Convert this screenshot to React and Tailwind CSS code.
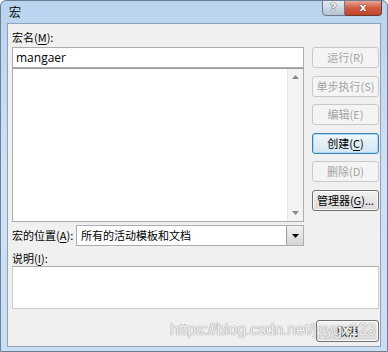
import React from 'react';

const cjk = { fontFamily: '"Noto Sans CJK SC", "Noto Sans", sans-serif' };

// 右側のボタン（無効 / 既定 / 通常）
const SideButton = ({ children, state = 'disabled', className = '' }) => {
  const base = 'h-[21px] w-[67px] rounded-[3px] border flex items-center justify-center text-[11px] leading-none whitespace-nowrap';
  const styles = {
    disabled: 'border-[#c7cacc] bg-[#f4f4f4] text-[#a3a3a3]',
    default: 'border-[#3c7fb1] bg-gradient-to-b from-[#eef6fc] to-[#d4e6f3] text-black shadow-[inset_0_0_0_1px_#a9d9f5]',
    normal: 'border-[#707070] bg-gradient-to-b from-[#f2f2f2] to-[#d9d9d9] text-black shadow-[inset_0_0_0_1px_#fbfbfb]',
  };
  return (
    <div className={`${base} ${styles[state]} ${className}`} style={cjk}>
      {children}
    </div>
  );
};

const U = ({ children }) => <span className="underline underline-offset-2">{children}</span>;

export default function App() {
  return (
    <div className="relative w-[388px] h-[352px] overflow-hidden bg-gradient-to-b from-[#b9d3ee] via-[#cfe2f6] to-[#c9def3] border border-[#6d7f94] rounded-t-[6px] flex flex-col">
      {/* タイトルバー */}
      <div className="h-[22px] flex items-start justify-between pl-[8px] pr-[5px]">
        <div className="text-[12px] leading-none pt-[5px] text-black" style={cjk}>宏</div>
        <div className="flex -mt-px">
          <div className="w-[23px] h-[16px] rounded-bl-[4px] border border-[#6b7a8c] bg-gradient-to-b from-[#e3ebf3] to-[#b4c4d4] flex items-center justify-center text-[11px] font-bold text-white" style={{ fontFamily: '"DejaVu Sans", sans-serif', textShadow: '0 0 1px #333, 0 0 1px #333' }}>?</div>
          <div className="w-[37px] h-[16px] rounded-br-[4px] border border-l-0 border-[#6b3a30] bg-gradient-to-b from-[#e8a697] via-[#cf5a42] to-[#c14429] flex items-center justify-center text-[11px] font-bold text-white" style={{ fontFamily: '"DejaVu Sans", sans-serif', textShadow: '0 0 1px #4a1a10, 0 0 1px #4a1a10' }}>x</div>
        </div>
      </div>

      {/* クライアント領域 */}
      <div className="flex-1 mx-[6px] mb-[4px] bg-[#f0f0f0] border border-[#8ea3b9] flex flex-col pl-[4px]">
        <div className="flex gap-[8px]">
          <div className="w-[292px] flex flex-col">
            <div className="text-[11px] leading-none mt-[8px] h-[15px] text-black" style={cjk}>宏名(<U>M</U>):</div>
            <div className="h-[21px] bg-white border border-[#abadb3] flex items-center pl-[3px] text-[12px] text-black" style={{ fontFamily: '"Open Sans", "Noto Sans", sans-serif' }}>mangaer</div>
            <div className="h-[154px] bg-white border border-[#abadb3] border-t-[#9a9da3] flex justify-end">
              <div className="w-[16px] bg-[#f3f3f3] border-l border-[#e6e6e6] flex flex-col items-center justify-between py-[6px]">
                <svg width="7" height="4" viewBox="0 0 7 4"><path d="M0 4 L3.5 0 L7 4 Z" fill="#8a8a8a" /></svg>
                <svg width="7" height="4" viewBox="0 0 7 4"><path d="M0 0 L3.5 4 L7 0 Z" fill="#8a8a8a" /></svg>
              </div>
            </div>
          </div>
          <div className="flex flex-col gap-[7.5px] mt-[23px]">
            <SideButton>运行(R)</SideButton>
            <SideButton>单步执行(S)</SideButton>
            <SideButton>编辑(E)</SideButton>
            <SideButton state="default">创建(<U>C</U>)</SideButton>
            <SideButton>删除(D)</SideButton>
            <SideButton state="normal">管理器(<U>G</U>)...</SideButton>
          </div>
        </div>

        {/* 宏的位置 */}
        <div className="flex items-center mt-[3px] w-[292px]">
          <div className="w-[64px] whitespace-nowrap text-[11px] leading-none text-black" style={cjk}>宏的位置(<U>A</U>):</div>
          <div className="flex-1 h-[21px] bg-white border border-[#abadb3] flex items-center justify-between">
            <span className="pl-[4px] text-[11px] leading-none text-black" style={cjk}>所有的活动模板和文档</span>
            <div className="w-[17px] h-[19px] bg-gradient-to-b from-[#f2f2f2] to-[#d4d4d4] border-l border-[#a0a0a0] flex items-center justify-center">
              <svg width="7" height="4" viewBox="0 0 7 4"><path d="M0 0 L3.5 4 L7 0 Z" fill="#000" /></svg>
            </div>
          </div>
        </div>

        {/* 说明 */}
        <div className="text-[11px] leading-none mt-[5px] h-[15px] flex items-center text-black" style={cjk}>说明(<U>I</U>):</div>
        <div className="h-[43px] mr-[1px] bg-white border border-[#c9cbcf] border-t-[#abadb3]"></div>

        <div className="flex justify-end mt-[11px] mr-[1px]">
          <div className="h-[22px] w-[63px] rounded-[3px] border border-[#707070] bg-gradient-to-b from-[#f2f2f2] to-[#d9d9d9] shadow-[inset_0_0_0_1px_#fbfbfb] flex items-center justify-center text-[11px] text-black" style={cjk}>取消</div>
        </div>
      </div>

      {/* 透かし */}
      <div className="absolute left-[169px] top-[321px] text-[16px] leading-none text-white/90 tracking-[-0.2px] pointer-events-none" style={{ fontFamily: '"Liberation Sans", Arial, sans-serif', textShadow: '0 0 1px #8a8a8a, 0 0 1px #8a8a8a' }}>https://blog.csdn.net/jpygx123</div>
    </div>
  );
}
